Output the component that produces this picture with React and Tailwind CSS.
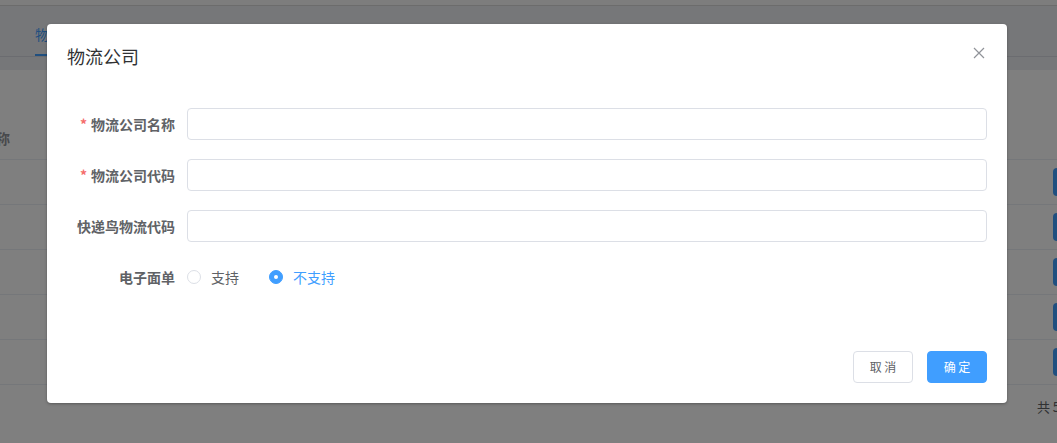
const font = { fontFamily: '"Noto Sans CJK SC", "Noto Sans", sans-serif' };

const FormRow = ({ label, required, children }) => (
  <div className="flex items-center h-8">
    <label className="w-[120px] shrink-0 pr-3 text-right text-sm font-bold text-[#606266] leading-8">
      {required && <span className="text-[#f56c6c] mr-1">*</span>}
      {label}
    </label>
    <div className="flex-1 flex items-center">{children}</div>
  </div>
);

const Radio = ({ label, checked }) => (
  <div className="flex items-center mr-[30px] cursor-pointer">
    <span
      className={
        checked
          ? "w-[14px] h-[14px] rounded-full bg-[#409eff] border border-[#409eff] flex items-center justify-center"
          : "w-[14px] h-[14px] rounded-full bg-white border border-[#dcdfe6]"
      }
    >
      {checked && <span className="w-1 h-1 rounded-full bg-white"></span>}
    </span>
    <span className={"ml-[10px] text-sm " + (checked ? "text-[#409eff]" : "text-[#606266]")}>
      {label}
    </span>
  </div>
);

const App = () => {
  const rows = [0, 1, 2, 3, 4];

  return (
    <div className="relative w-full h-[443px] overflow-hidden bg-white" style={font}>
      {/* page under the mask */}
      <div className="h-[6px] bg-[#fafafa] border-b border-[#d8d8d8]"></div>
      <div className="h-[64px] bg-[#eceef3]">
        <div className="h-[51px] border-b border-[#d6d9e0] px-[35px] flex items-end">
          <div className="h-full flex flex-col justify-end">
            <span className="text-sm text-[#409eff] leading-[40px]">物流公司</span>
            <div className="h-[2px] bg-[#409eff]"></div>
          </div>
        </div>
      </div>

      <div className="pt-[47px]">
        <div className="flex items-center h-[43px] border-b border-[#ebeef5]">
          <div className="w-[10px] flex justify-end whitespace-nowrap text-sm font-bold text-[#909399]">
            物流公司名称
          </div>
        </div>
        {rows.map((r) => (
          <div key={r} className="flex items-center justify-end h-[45px] border-b border-[#ebeef5]">
            <div className="w-[40px] h-[28px] rounded bg-[#409eff] -mr-9"></div>
          </div>
        ))}
        <div className="flex justify-end pr-1 pt-[12px] text-[13px] text-[#606266]">
          <span className="-mr-[23px]">共 5 条</span>
        </div>
      </div>

      {/* mask */}
      <div className="absolute inset-0 bg-black/50"></div>

      {/* dialog */}
      <div className="absolute left-[47px] top-[24px] w-[960px] bg-white rounded-sm shadow-[0_1px_3px_rgba(0,0,0,0.3)]">
        <div className="relative px-5 pt-5 pb-[10px]">
          <span className="block text-lg leading-6 text-[#303133]">物流公司</span>
          <button className="absolute right-[22px] top-[23px] text-[#909399]">
            <svg width="12" height="12" viewBox="0 0 12 12" fill="none" stroke="currentColor" strokeWidth="1.2">
              <path d="M1 1 L11 11 M11 1 L1 11" />
            </svg>
          </button>
        </div>

        <div className="px-5 pt-[30px] pb-12 flex flex-col gap-[19px]">
          <FormRow label="物流公司名称" required>
            <input className="w-full h-8 px-[15px] border border-[#dcdfe6] rounded text-sm outline-none" />
          </FormRow>
          <FormRow label="物流公司代码" required>
            <input className="w-full h-8 px-[15px] border border-[#dcdfe6] rounded text-sm outline-none" />
          </FormRow>
          <FormRow label="快递鸟物流代码">
            <input className="w-full h-8 px-[15px] border border-[#dcdfe6] rounded text-sm outline-none" />
          </FormRow>
          <FormRow label="电子面单">
            <Radio label="支持" />
            <Radio label="不支持" checked />
          </FormRow>
        </div>

        <div className="px-5 pt-[10px] pb-5 flex justify-end gap-[14px]">
          <button className="w-[60px] h-8 border border-[#dcdfe6] rounded bg-white text-xs text-[#606266]">
            取 消
          </button>
          <button className="w-[60px] h-8 border border-[#409eff] rounded bg-[#409eff] text-xs text-white">
            确 定
          </button>
        </div>
      </div>
    </div>
  );
};

export default App;
